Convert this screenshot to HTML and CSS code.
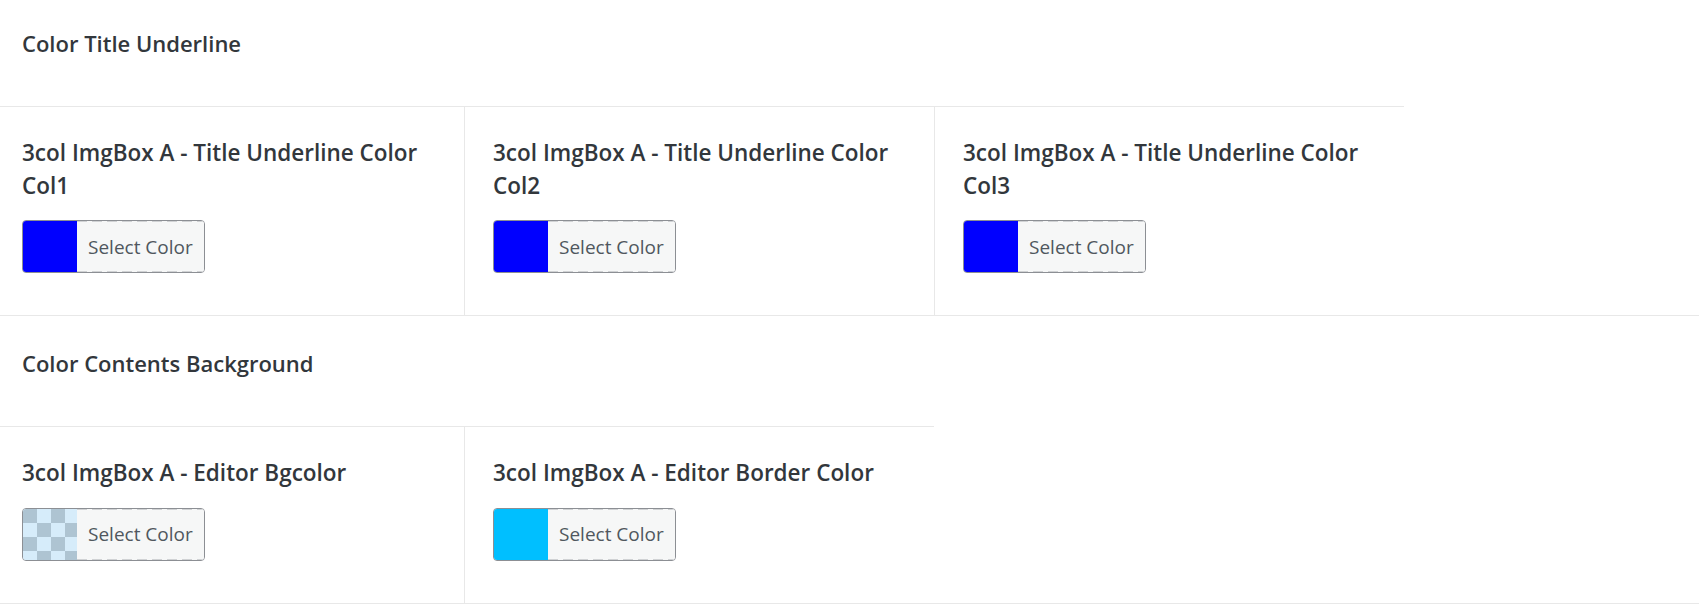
FILE: index.html
```html
<!DOCTYPE html>
<html lang="en">
<head>
<meta charset="utf-8">
<title>Color settings</title>
<link rel="stylesheet" href="styles.css">
</head>
<body>
<div class="page">
  <section class="section section-first">
    <div class="section-head"><h2 class="section-title">Color Title Underline</h2></div>
    <div class="fields fields-3">
      <div class="field">
        <label class="field-label">3col ImgBox A - Title Underline Color Col1</label>
        <button class="color-btn" type="button"><span class="swatch swatch-blue"></span><span class="color-text">Select Color</span></button>
      </div>
      <div class="field">
        <label class="field-label">3col ImgBox A - Title Underline Color Col2</label>
        <button class="color-btn" type="button"><span class="swatch swatch-blue"></span><span class="color-text">Select Color</span></button>
      </div>
      <div class="field">
        <label class="field-label">3col ImgBox A - Title Underline Color Col3</label>
        <button class="color-btn" type="button"><span class="swatch swatch-blue"></span><span class="color-text">Select Color</span></button>
      </div>
    </div>
  </section>
  <section class="section">
    <div class="section-head"><h2 class="section-title">Color Contents Background</h2></div>
    <div class="fields fields-2">
      <div class="field">
        <label class="field-label">3col ImgBox A - Editor Bgcolor</label>
        <button class="color-btn" type="button"><span class="swatch swatch-clear"></span><span class="color-text">Select Color</span></button>
      </div>
      <div class="field">
        <label class="field-label">3col ImgBox A - Editor Border Color</label>
        <button class="color-btn" type="button"><span class="swatch swatch-sky"></span><span class="color-text">Select Color</span></button>
      </div>
    </div>
  </section>
</div>
</body>
</html>
```
FILE: styles.css
```css
html, body {
  margin: 0;
  padding: 0;
  background: #ffffff;
}

body {
  font-family: "Open Sans", "Noto Sans", "Liberation Sans", sans-serif;
  color: #32373c;
}

.section {
  border-bottom: 1px solid #e8e8e8;
}

.section-head {
  height: 110px;
  box-sizing: border-box;
  padding: 31px 0 0 22px;
}

.section-first .section-head {
  height: 106px;
  padding-top: 27px;
}

.section-title {
  margin: 0;
  font-size: 22px;
  font-weight: 600;
  line-height: 33px;
}

.fields {
  display: grid;
}

.fields-3 {
  grid-template-columns: 464px 470px 470px;
}

.fields-2 {
  grid-template-columns: 464px 470px;
}

.field {
  border-top: 1px solid #e8e8e8;
  padding: 30px 28px 42px 28px;
  display: flex;
  flex-direction: column;
  align-items: flex-start;
}

.field:first-child {
  padding-left: 22px;
}

.field + .field {
  border-left: 1px solid #e8e8e8;
}

.field-label {
  display: block;
  font-size: 22.5px;
  font-weight: 600;
  line-height: 32.5px;
  margin-bottom: 18px;
}

.color-btn {
  display: flex;
  align-items: stretch;
  width: 183px;
  height: 53px;
  padding: 0;
  margin: 0;
  border: 1px solid #8c8f94;
  border-radius: 4px;
  overflow: hidden;
  background: #f6f7f7;
  font-family: inherit;
  cursor: pointer;
}

.swatch {
  width: 54px;
  flex: none;
}

.swatch-blue {
  background: #0000ff;
}

.swatch-sky {
  background: #00bfff;
}

.swatch-clear {
  background-color: #d6ecfa;
  background-image: conic-gradient(#aec4d2 0 25%, transparent 0 50%, #aec4d2 0 75%, transparent 0);
  background-size: 28px 28px;
  background-position: 14px 0;
}

.color-text {
  flex: 1;
  display: flex;
  align-items: center;
  padding-left: 11px;
  font-size: 19px;
  font-weight: 400;
  color: #50575e;
  background:
    repeating-linear-gradient(90deg, #d0d2d4 0 10px, transparent 10px 15px) top left / 100% 1px no-repeat,
    repeating-linear-gradient(90deg, #d0d2d4 0 10px, transparent 10px 15px) bottom left / 100% 1px no-repeat,
    #f6f7f7;
}
```
